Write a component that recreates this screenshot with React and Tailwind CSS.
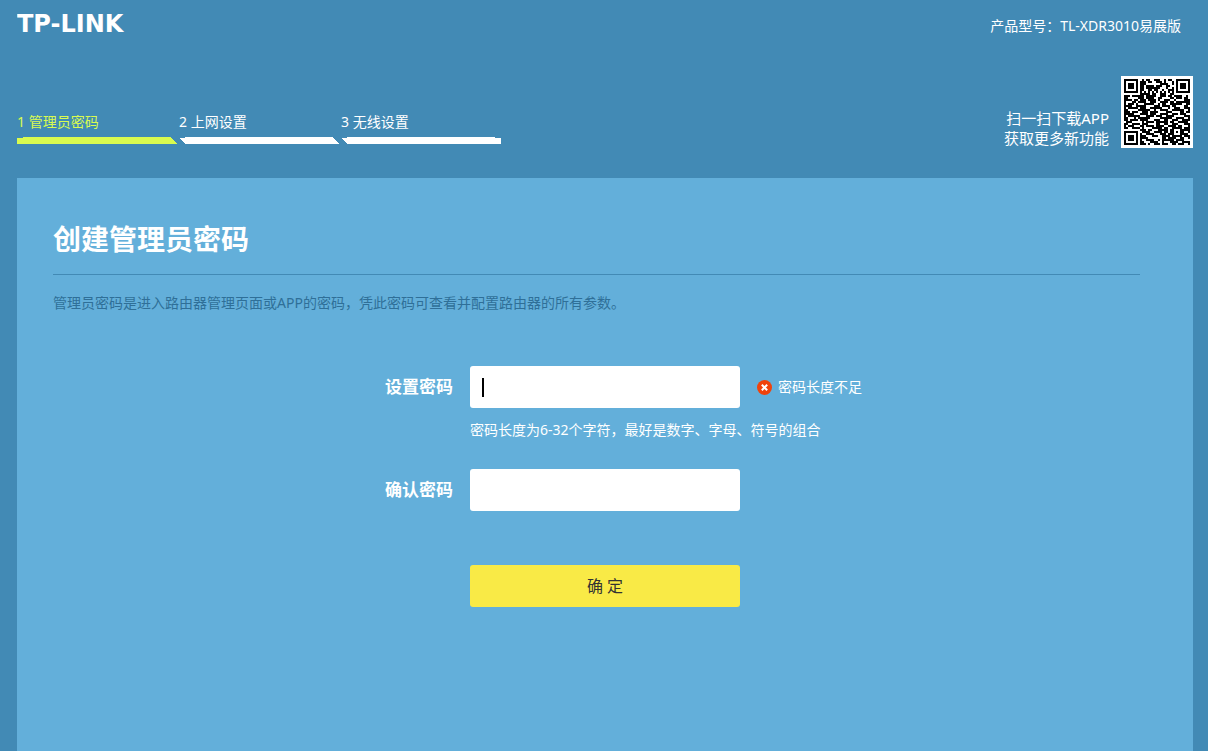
import { useState } from "react";

const steps = [
  { id: 1, label: "管理员密码", points: "0,1 6,1 6,0 154,0 160,7 0,7" },
  { id: 2, label: "上网设置", points: "0,1 6,1 6,0 154,0 160,7 7,7" },
  { id: 3, label: "无线设置", points: "0,1 6,1 6,0 154,0 154,1 160,1 160,7 7,7" },
];

const qrRows = [
  "#######..#.##..###..#.##..#######",
  "#.....#.###.##..###.#...#.#.....#",
  "#.###.#.###.......####..#.#.###.#",
  "#.###.#.##.####.###..##...#.###.#",
  "#.###.#.##.#######...#..#.#.###.#",
  "#.....#.##..##.##..#..###.#.....#",
  "#######.#.#.#.#.#.#.#.#.#.#######",
  "........#####.##..###..##........",
  "###.######.#####..###.##.####..#.",
  "##.....###.####..##....##.###.##.",
  "####.##.###.####.#..###..#....###",
  "#...##.####..###..####.##.#######",
  "#.###.#...#####..#.##..######..##",
  "####..#####....###.####.##....##.",
  "#.#####.###..######...#..###..###",
  "##.....######..#..####..######..#",
  "###.###..###.####....###....##.##",
  "#####...####.###..####..###.###..",
  "#.######...####.###..####.....###",
  "##...#.######.....######..####..#",
  "##.####.####...###..##..###..####",
  ".###.....#.####.######.##..#####.",
  "##..####.###....##..##..###...###",
  "#.###...##.####.####..####.##...#",
  "##..####.#....#####.##..#####.###",
  "........###.##...#####.##...#####",
  "#######..####..####.##.##.#.##..#",
  "#.....#.#..####...###.###...####.",
  "#.###.#.###...###..####.#####.###",
  "#.###.#.####.......##.####..##..#",
  "#.###.#.#..####..#.######.####...",
  "#.....#.##...####..#...####..####",
  "#######.###.#..###.###..##.###..#",
];

function QrCode() {
  return (
    <svg viewBox="0 0 72 72" className="h-[72px] w-[72px] shrink-0" shapeRendering="crispEdges" role="img" aria-label="QR">
      <rect width="72" height="72" fill="#fff" />
      {qrRows.map((row, y) =>
        row.split("").map((cell, x) =>
          cell === "#" ? <rect key={`${x}-${y}`} x={3 + x * 2} y={3 + y * 2} width="2" height="2" fill="#000" /> : null
        )
      )}
    </svg>
  );
}

export default function App() {
  const [password, setPassword] = useState("");
  const [confirm, setConfirm] = useState("");

  return (
    <div className="flex min-h-screen flex-col bg-[#428ab5] pr-[15px] pl-[17px] font-['Noto_Sans','Noto_Sans_CJK_SC',sans-serif] text-sm leading-5 text-white">
      <header>
        <div className="flex justify-between pt-2 pr-3">
          <svg className="h-8 w-32" role="img" aria-label="TP-LINK">
            <text x="0" y="24" fontSize="24" className="fill-white font-['DejaVu_Sans',sans-serif] font-bold">
              TP-LINK
            </text>
          </svg>
          <p className="pt-2">产品型号：TL-XDR3010易展版</p>
        </div>

        <div className="mt-9 flex items-end justify-between">
          <ol className="flex gap-0.5 pb-1">
            {steps.map((step) => (
              <li key={step.id} className={step.id === 1 ? "text-[#d9fb50]" : "text-white"}>
                <span className="block pb-[5px]">
                  {step.id} {step.label}
                </span>
                <svg viewBox="0 0 160 7" className="block h-[7px] w-40" fill="currentColor" shapeRendering="crispEdges">
                  <polygon points={step.points} />
                </svg>
              </li>
            ))}
          </ol>
          <div className="flex items-end gap-3">
            <p className="text-right text-[15px] leading-5">
              扫一扫下载APP
              <br />
              获取更多新功能
            </p>
            <QrCode />
          </div>
        </div>
      </header>

      <main className="mt-[30px] flex-1 bg-[#63afda]">
        <div className="pt-[39px] pr-[53px] pl-9">
          <h1 className="border-b border-[#428ab5] pb-[13px] text-[28px] leading-11 font-bold">创建管理员密码</h1>
          <p className="pt-[18px] text-[#2f6f98]">
            管理员密码是进入路由器管理页面或APP的密码，凭此密码可查看并配置路由器的所有参数。
          </p>
        </div>

        <form
          className="mt-[53px] grid grid-cols-[1fr_270px_1fr] items-center gap-x-[17px] pb-10"
          onSubmit={(e) => e.preventDefault()}
        >
          <label htmlFor="password" className="text-right text-[17px] font-bold">
            设置密码
          </label>
          <div className="relative">
            <input
              id="password"
              type="password"
              value={password}
              onChange={(e) => setPassword(e.target.value)}
              className="block h-[42px] w-full rounded-[3px] bg-white px-3 text-base text-black caret-transparent outline-none"
            />
            {password === "" && <span className="absolute top-3 left-3 h-[19px] w-0.5 bg-black" />}
          </div>
          <p className="flex items-center gap-1.5">
            <svg viewBox="0 0 15 15" className="h-[15px] w-[15px]">
              <circle cx="7.5" cy="7.5" r="7.5" fill="#f0430b" />
              <path d="M4.8 4.8l5.4 5.4M10.2 4.8l-5.4 5.4" stroke="#fff" strokeWidth="2" />
            </svg>
            密码长度不足
          </p>

          <p className="col-start-2 mt-3 whitespace-nowrap">密码长度为6-32个字符，最好是数字、字母、符号的组合</p>

          <label htmlFor="confirm" className="col-start-1 mt-[29px] text-right text-[17px] font-bold">
            确认密码
          </label>
          <input
            id="confirm"
            type="password"
            value={confirm}
            onChange={(e) => setConfirm(e.target.value)}
            className="mt-[29px] block h-[42px] w-full rounded-[3px] bg-white px-3 text-base text-black outline-none"
          />

          <button
            type="submit"
            className="col-start-2 mt-[54px] h-[42px] rounded-[3px] bg-[#f9ea46] text-base text-[#333333]"
          >
            确 定
          </button>
        </form>
      </main>
    </div>
  );
}
